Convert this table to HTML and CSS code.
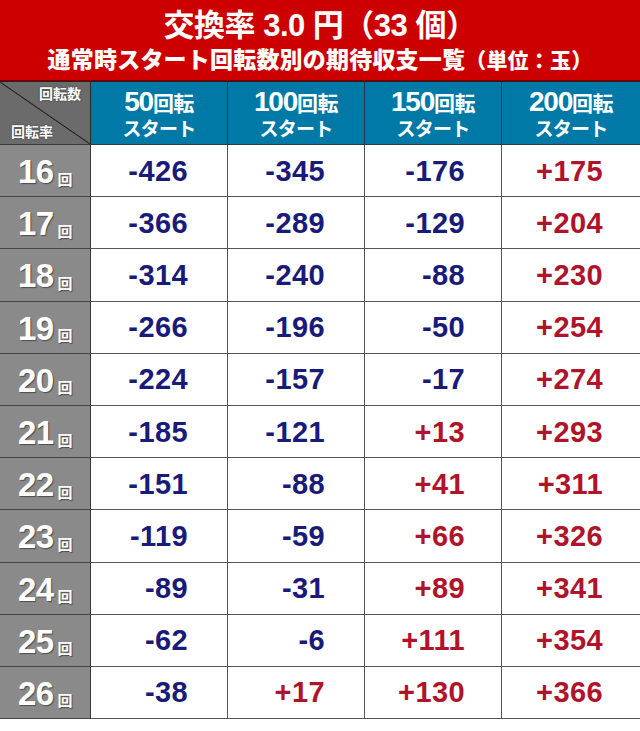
FILE: index.html
```html
<!DOCTYPE html>
<html lang="ja">
<head>
<meta charset="utf-8">
<link rel="stylesheet" href="styles.css">
</head>
<body>
<div class="page">
  <header class="title">
    <div class="t1">交換率 3.0 円（33 個）</div>
    <div class="t2">通常時スタート回転数別の期待収支一覧<span class="unit">（単位：玉）</span></div>
  </header>
  <div class="grid">
    <div class="corner"><span class="c-top">回転数</span><span class="c-bot">回転率</span></div>
    <div class="head"><div class="h1"><span class="hn">50</span>回転</div><div class="h2">スタート</div></div>
    <div class="head"><div class="h1"><span class="hn">100</span>回転</div><div class="h2">スタート</div></div>
    <div class="head"><div class="h1"><span class="hn">150</span>回転</div><div class="h2">スタート</div></div>
    <div class="head last"><div class="h1"><span class="hn">200</span>回転</div><div class="h2">スタート</div></div>

    <div class="lab">16<span class="kai">回</span></div><div class="cell neg">-426</div><div class="cell neg">-345</div><div class="cell neg c3">-176</div><div class="cell pos c4">+175</div>
    <div class="lab">17<span class="kai">回</span></div><div class="cell neg">-366</div><div class="cell neg">-289</div><div class="cell neg c3">-129</div><div class="cell pos c4">+204</div>
    <div class="lab">18<span class="kai">回</span></div><div class="cell neg">-314</div><div class="cell neg">-240</div><div class="cell neg c3">-88</div><div class="cell pos c4">+230</div>
    <div class="lab">19<span class="kai">回</span></div><div class="cell neg">-266</div><div class="cell neg">-196</div><div class="cell neg c3">-50</div><div class="cell pos c4">+254</div>
    <div class="lab">20<span class="kai">回</span></div><div class="cell neg">-224</div><div class="cell neg">-157</div><div class="cell neg c3">-17</div><div class="cell pos c4">+274</div>
    <div class="lab">21<span class="kai">回</span></div><div class="cell neg">-185</div><div class="cell neg">-121</div><div class="cell pos c3">+13</div><div class="cell pos c4">+293</div>
    <div class="lab">22<span class="kai">回</span></div><div class="cell neg">-151</div><div class="cell neg">-88</div><div class="cell pos c3">+41</div><div class="cell pos c4">+311</div>
    <div class="lab">23<span class="kai">回</span></div><div class="cell neg">-119</div><div class="cell neg">-59</div><div class="cell pos c3">+66</div><div class="cell pos c4">+326</div>
    <div class="lab">24<span class="kai">回</span></div><div class="cell neg">-89</div><div class="cell neg">-31</div><div class="cell pos c3">+89</div><div class="cell pos c4">+341</div>
    <div class="lab">25<span class="kai">回</span></div><div class="cell neg">-62</div><div class="cell neg">-6</div><div class="cell pos c3">+111</div><div class="cell pos c4">+354</div>
    <div class="lab">26<span class="kai">回</span></div><div class="cell neg">-38</div><div class="cell pos">+17</div><div class="cell pos c3">+130</div><div class="cell pos c4">+366</div>
  </div>
</div>
</body>
</html>
```

FILE: styles.css
```css
* { box-sizing: border-box; margin: 0; padding: 0; }
html, body { background: #fff; }
body {
  font-family: "Liberation Sans", "Noto Sans CJK JP", sans-serif;
  font-weight: bold;
  width: 640px;
}
.page { width: 640px; }

.title {
  height: 82px;
  background: #cc0000;
  border-bottom: 2px solid #5a0b0b;
  color: #fff;
  text-align: center;
  padding-top: 8px;
}
.t1 {
  font-family: "Liberation Sans", "Noto Sans CJK JP", sans-serif;
  font-size: 31px;
  line-height: 35px;
  letter-spacing: -0.5px;
}
.t2 {
  font-family: "Noto Sans CJK JP", sans-serif;
  font-weight: 900;
  font-size: 23px;
  line-height: 30px;
  letter-spacing: 0.2px;
}
.unit { font-size: 21px; }

.grid {
  display: grid;
  grid-template-columns: 91px 137px 137px 137px 138px;
  grid-template-rows: 63px repeat(11, 52.2px);
}

.corner {
  background: linear-gradient(to top right, #6b6b6b calc(50% - 1px), #1e1e1e 50%, #6b6b6b calc(50% + 1px));
  border-right: 1px solid #2a2a2a;
  border-bottom: 1px solid #3a3a3a;
  color: #fff;
  font-family: "Noto Sans CJK JP", sans-serif;
  font-size: 14px;
  line-height: 15px;
  display: flex;
  flex-direction: column;
  justify-content: space-between;
  padding: 4px 9px 5px 11px;
  text-shadow: 0 0 2px rgba(0,0,0,.5);
}
.c-top { align-self: flex-end; }
.c-bot { align-self: flex-start; }

.head {
  background: #0079a6;
  border-right: 1px solid #1d3a4a;
  border-bottom: 1px solid #2a3c46;
  color: #fff;
  display: flex;
  flex-direction: column;
  align-items: center;
  justify-content: center;
  padding-bottom: 1px;
}
.head.last { border-right: none; }
.h1 {
  font-family: "Noto Sans CJK JP", sans-serif;
  font-size: 21px;
  line-height: 29px;
  letter-spacing: -0.5px;
}
.hn {
  font-family: "Liberation Sans", sans-serif;
  font-size: 28px;
  letter-spacing: -1.2px;
}
.h2 {
  font-family: "Noto Sans CJK JP", sans-serif;
  font-size: 19px;
  line-height: 22px;
  letter-spacing: -0.8px;
}

.lab {
  background: #8a8a8a;
  border-right: 1px solid #3a3a3a;
  border-bottom: 1px solid #444;
  color: #fff;
  font-size: 33px;
  letter-spacing: -0.5px;
  display: flex;
  align-items: center;
  justify-content: center;
  padding-top: 3px;
  text-shadow: 1px 1px 1px rgba(0,0,0,.45);
}
.kai {
  font-family: "Noto Sans CJK JP", sans-serif;
  font-size: 15px;
  margin-left: 4px;
  padding-top: 12px;
}

.cell {
  border-right: 1px solid #555;
  border-bottom: 1px solid #555;
  font-size: 29px;
  letter-spacing: 0.4px;
  display: flex;
  align-items: center;
  justify-content: flex-end;
  padding-right: 39px;
  padding-top: 1px;
}
.cell.c3 { padding-right: 36px; }
.cell.c4 { padding-right: 37px; border-right: none; }
.neg { color: #1a1a78; }
.pos { color: #b0142a; }
```
